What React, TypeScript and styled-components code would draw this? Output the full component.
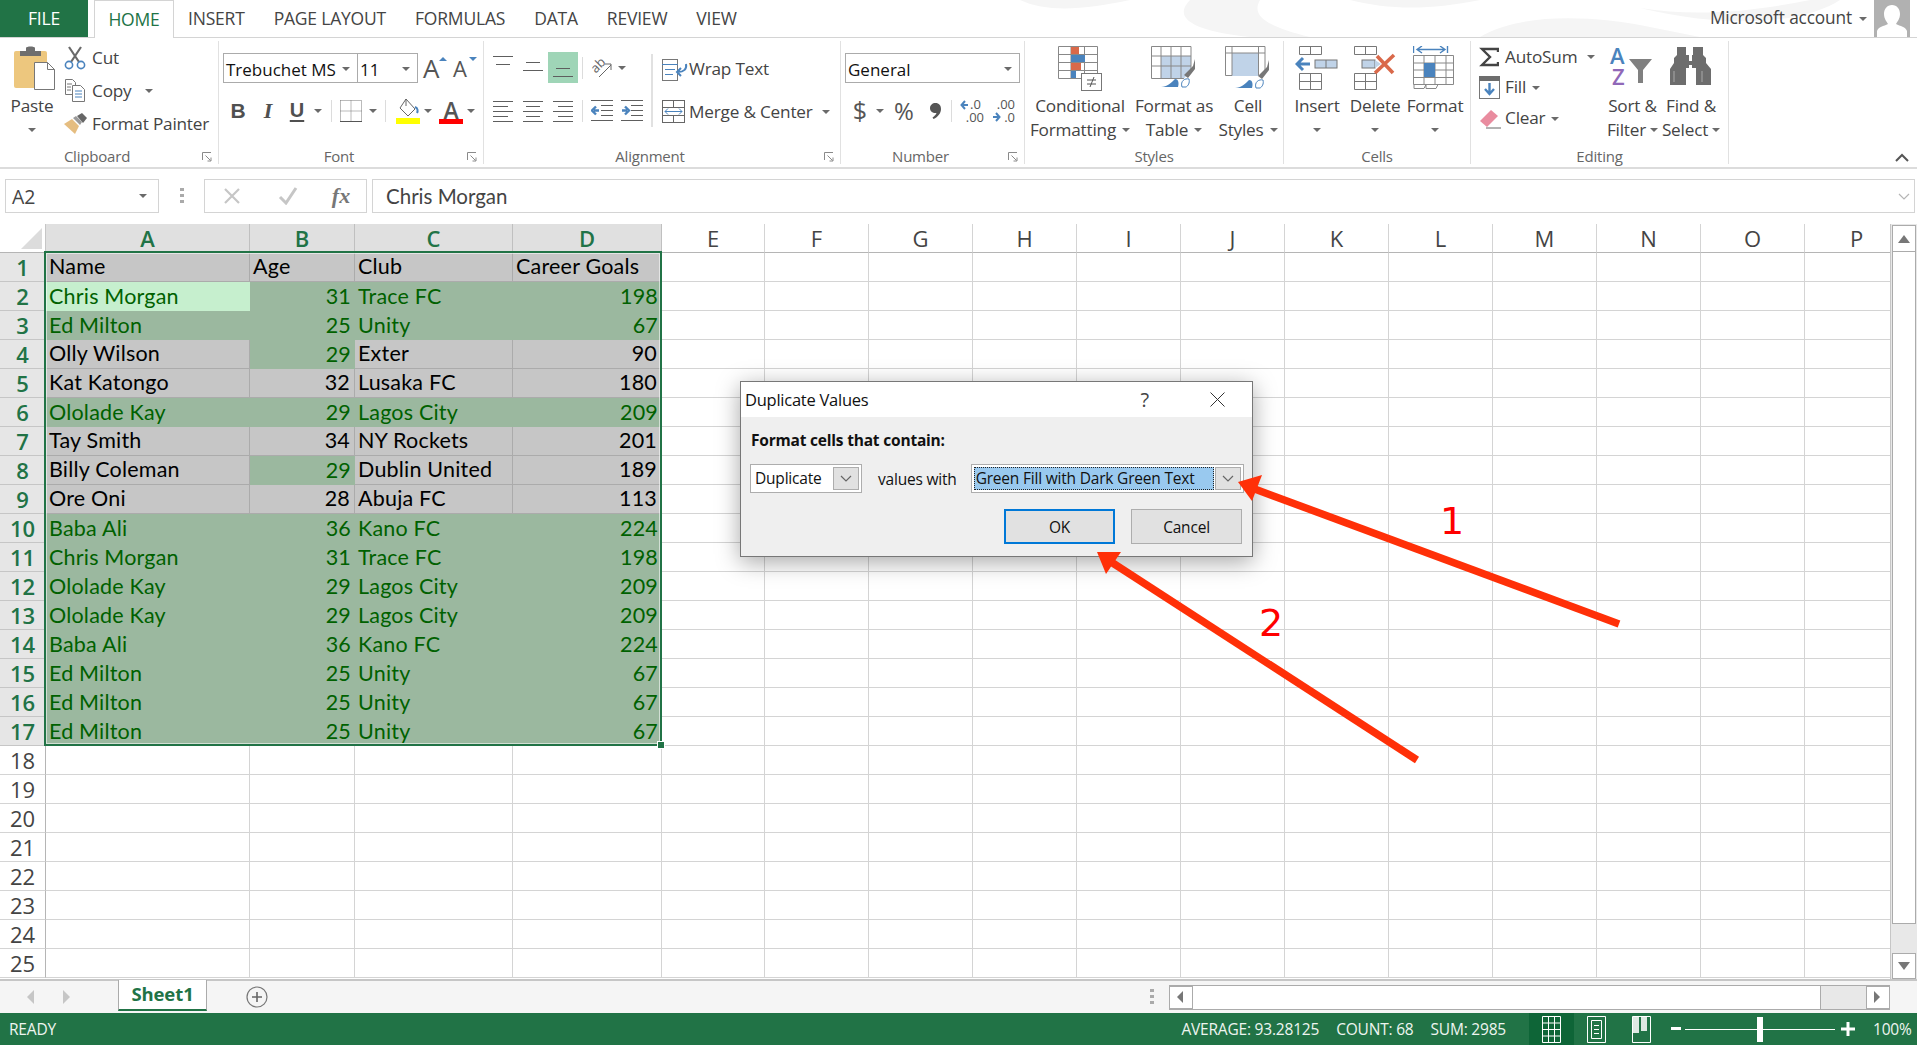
import styled, { createGlobalStyle } from 'styled-components';

const UI_FONT = `'Open Sans', 'Noto Sans', sans-serif`;
const CELL_FONT = `Lato, 'Open Sans', sans-serif`;
const GREEN = '#217346';
const INK = '#444444';

const GlobalStyle = createGlobalStyle`
    html, body {
        margin: 0;
        padding: 0;
        overflow: hidden;
        background: #fff;
    }
    * { box-sizing: border-box; }
`;

/* ---------- data ---------- */
type Tone = 'grey' | 'green' | 'active';

interface RowData {
    name: string;
    age: string;
    club: string;
    goals: string;
    tones: Tone[];
}

const G: Tone = 'grey';
const V: Tone = 'green';
const allGrey = [G, G, G, G];
const allGreen = [V, V, V, V];
const ageOnly = [G, V, G, G];

const rows: RowData[] = [
    { name: 'Name', age: 'Age', club: 'Club', goals: 'Career Goals', tones: allGrey },
    { name: 'Chris Morgan', age: '31', club: 'Trace FC', goals: '198', tones: ['active', V, V, V] },
    { name: 'Ed Milton', age: '25', club: 'Unity', goals: '67', tones: allGreen },
    { name: 'Olly Wilson', age: '29', club: 'Exter', goals: '90', tones: ageOnly },
    { name: 'Kat Katongo', age: '32', club: 'Lusaka FC', goals: '180', tones: allGrey },
    { name: 'Ololade Kay', age: '29', club: 'Lagos City', goals: '209', tones: allGreen },
    { name: 'Tay Smith', age: '34', club: 'NY Rockets', goals: '201', tones: allGrey },
    { name: 'Billy Coleman', age: '29', club: 'Dublin United', goals: '189', tones: ageOnly },
    { name: 'Ore Oni', age: '28', club: 'Abuja FC', goals: '113', tones: allGrey },
    { name: 'Baba Ali', age: '36', club: 'Kano FC', goals: '224', tones: allGreen },
    { name: 'Chris Morgan', age: '31', club: 'Trace FC', goals: '198', tones: allGreen },
    { name: 'Ololade Kay', age: '29', club: 'Lagos City', goals: '209', tones: allGreen },
    { name: 'Ololade Kay', age: '29', club: 'Lagos City', goals: '209', tones: allGreen },
    { name: 'Baba Ali', age: '36', club: 'Kano FC', goals: '224', tones: allGreen },
    { name: 'Ed Milton', age: '25', club: 'Unity', goals: '67', tones: allGreen },
    { name: 'Ed Milton', age: '25', club: 'Unity', goals: '67', tones: allGreen },
    { name: 'Ed Milton', age: '25', club: 'Unity', goals: '67', tones: allGreen },
];

const columns = 'ABCDEFGHIJKLMNOP'.split('');
const tabs = ['INSERT', 'PAGE LAYOUT', 'FORMULAS', 'DATA', 'REVIEW', 'VIEW'];
const totalRows = 25;

/* ---------- shell ---------- */
const Window = styled.div`
    position: relative;
    width: 1917px;
    height: 1045px;
    display: flex;
    flex-direction: column;
    overflow: hidden;
    font-family: ${UI_FONT};
    color: ${INK};
    background: #fff;
`;

const TabBar = styled.div`
    position: relative;
    height: 38px;
    flex: none;
    display: flex;
    align-items: stretch;
    border-bottom: 1px solid #d4d4d4;
`;

const Swirls = styled.svg`
    position: absolute;
    left: 1000px;
    top: 0;
`;

const FileTab = styled.div`
    width: 88px;
    height: 37px;
    padding-bottom: 2px;
    background: ${GREEN};
    color: #fff;
    font-size: 17.5px;
    letter-spacing: -0.2px;
    display: flex;
    align-items: center;
    justify-content: center;
`;

const HomeTab = styled.div`
    width: 80px;
    height: 38px;
    margin-left: 6px;
    padding-bottom: 2px;
    background: #fff;
    border: 1px solid #d4d4d4;
    border-bottom: none;
    color: ${GREEN};
    font-size: 17.5px;
    letter-spacing: -0.2px;
    display: flex;
    align-items: center;
    justify-content: center;
    z-index: 1;
`;

const TabList = styled.div`
    display: flex;
    align-items: center;
    gap: 29px;
    margin-left: 14px;
    padding-bottom: 2px;
    font-size: 17.5px;
    letter-spacing: -0.2px;
`;

const Account = styled.div`
    position: relative;
    margin-left: auto;
    display: flex;
    align-items: center;
    font-size: 17.3px;
    letter-spacing: -0.15px;
    padding-right: 7px;
`;

const AccountName = styled.span`
    padding-bottom: 2px;
`;

const Avatar = styled.svg`
    margin-left: 7px;
`;

const Caret = styled.span<{ $ml?: number }>`
    display: inline-block;
    flex: none;
    width: 0;
    height: 0;
    margin-left: ${(p) => p.$ml ?? 6}px;
    border-left: 4px solid transparent;
    border-right: 4px solid transparent;
    border-top: 4px solid #6a6a6a;
    vertical-align: middle;
`;

/* ---------- ribbon ---------- */
const Ribbon = styled.div`
    position: relative;
    height: 131px;
    flex: none;
    display: flex;
    padding-top: 3px;
    border-bottom: 2px solid #dcdcdc;
`;

const Group = styled.div<{ $w: number }>`
    width: ${(p) => p.$w}px;
    height: 123px;
    flex: none;
    display: flex;
    flex-direction: column;
    border-right: 1px solid #e1e1e1;
`;

const GroupBody = styled.div<{ $pl?: number }>`
    height: 108px;
    display: flex;
    padding-left: ${(p) => p.$pl ?? 0}px;
`;

const GroupFoot = styled.div<{ $launch?: boolean }>`
    position: relative;
    height: 14px;
    line-height: 14px;
    font-size: 15px;
    color: #666;
    text-align: center;
    letter-spacing: -0.2px;
    padding-right: ${(p) => (p.$launch ? 24 : 0)}px;
`;

const Launcher = styled.svg`
    position: absolute;
    right: 6px;
    top: 3px;
`;

const Collapse = styled.svg`
    position: absolute;
    left: 1895px;
    top: 115px;
`;

const PasteButton = styled.div`
    width: 64px;
    display: flex;
    flex-direction: column;
    align-items: center;
    padding-top: 5px;
    padding-left: 6px;
    font-size: 17.2px;
    line-height: 24px;
    letter-spacing: -0.2px;
`;

const PasteLabel = styled.div`
    margin-top: 3px;
    margin-left: -6px;
`;

const CaretLine = styled.div`
    height: 24px;
    display: flex;
    align-items: center;
    justify-content: center;
`;

const ActionColumn = styled.div<{ $w?: number }>`
    display: flex;
    flex-direction: column;
    ${(p) => (p.$w ? `width: ${p.$w}px;` : '')}
`;

const ActionRow = styled.div<{ $h: number }>`
    height: ${(p) => p.$h}px;
    display: flex;
    align-items: center;
    font-size: 17.2px;
    letter-spacing: -0.2px;
    white-space: nowrap;
`;

const ActionText = styled.span`
    padding-bottom: 2px;
`;

const IconSlot = styled.span<{ $w: number }>`
    width: ${(p) => p.$w}px;
    flex: none;
    display: flex;
    align-items: center;
`;

const ToolStack = styled.div`
    display: flex;
    flex-direction: column;
    padding-top: 11px;
    gap: 12px;
`;

const ToolRow = styled.div`
    height: 31px;
    display: flex;
    align-items: center;
`;

const Tool = styled.span<{ $w: number; $ml?: number; $active?: boolean }>`
    width: ${(p) => p.$w}px;
    height: 31px;
    margin-left: ${(p) => p.$ml ?? 0}px;
    flex: none;
    display: flex;
    align-items: center;
    justify-content: center;
    background: ${(p) => (p.$active ? '#9fd5b7' : 'transparent')};
`;

const Sep = styled.span<{ $ml: number }>`
    width: 1px;
    height: 22px;
    flex: none;
    margin-left: ${(p) => p.$ml}px;
    background: #dcdcdc;
`;

const Combo = styled.div<{ $w: number; $joined?: boolean }>`
    width: ${(p) => p.$w}px;
    height: 30px;
    margin-top: 1px;
    margin-left: ${(p) => (p.$joined ? -1 : 0)}px;
    flex: none;
    display: flex;
    align-items: center;
    justify-content: space-between;
    padding: 2px 7px 0 2px;
    border: 1px solid #ababab;
    font-size: 17px;
    color: #111;
`;

const BoldTool = styled(Tool)`
    font-family: 'Liberation Sans', sans-serif;
    font-size: 21px;
    font-weight: 700;
    color: #505050;
`;

const ItalicTool = styled(BoldTool)`
    font-family: 'Liberation Serif', serif;
    font-style: italic;
    font-weight: 700;
    font-size: 22px;
`;

const UnderlineTool = styled(BoldTool)`
    font-weight: 700;
    text-decoration: underline;
    text-underline-offset: 3px;
    font-size: 20px;
`;

const GrowLetter = styled.span<{ $size: number; $ml: number }>`
    position: relative;
    margin-left: ${(p) => p.$ml}px;
    padding-top: 2px;
    width: 22px;
    font-size: ${(p) => p.$size}px;
    line-height: 31px;
    color: #555;
    text-align: left;
`;

const GrowMark = styled.span<{ $up?: boolean }>`
    position: absolute;
    right: -2px;
    top: 6px;
    width: 0;
    height: 0;
    border-left: 4px solid transparent;
    border-right: 4px solid transparent;
    border-${(p) => (p.$up ? 'bottom' : 'top')}: 4px solid #4a83bd;
`;

const RightAlignBlock = styled.div`
    margin: 13px 0 0 6px;
    height: 73px;
    padding-left: 9px;
    border-left: 2px solid #e1e1e1;
    display: flex;
    flex-direction: column;
    justify-content: space-between;
`;

const NumberGlyph = styled.span<{ $w: number; $ml: number; $size: number }>`
    width: ${(p) => p.$w}px;
    margin-left: ${(p) => p.$ml}px;
    font-size: ${(p) => p.$size}px;
    line-height: 31px;
    text-align: center;
    color: #555;
    flex: none;
`;

const CommaSlot = styled.span`
    width: 14px;
    margin-left: 10px;
    flex: none;
    display: flex;
    justify-content: center;
`;

const BigButton = styled.div<{ $w: number }>`
    width: ${(p) => p.$w}px;
    flex: none;
    display: flex;
    flex-direction: column;
    align-items: center;
    font-size: 17.2px;
    line-height: 24px;
    letter-spacing: -0.2px;
    white-space: nowrap;
`;

const BigIcon = styled.div`
    height: 53px;
    padding-top: 5px;
    display: flex;
    align-items: flex-start;
    justify-content: center;
`;

const BigLine = styled.div`
    height: 24px;
    display: flex;
    align-items: center;
    justify-content: center;
`;

/* glyphs inside these icons sit tight, so the svg box is larger than the drawing */
const BleedIcon = styled.svg<{ $bleed: number }>`
    margin: -${(p) => p.$bleed}px;
    flex: none;
`;

/* ---------- formula bar ---------- */
const FormulaBar = styled.div`
    height: 34px;
    margin-top: 10px;
    flex: none;
    display: flex;
    align-items: stretch;
    padding: 0 2px 0 5px;
`;

const NameBox = styled.div`
    width: 154px;
    display: flex;
    align-items: center;
    justify-content: space-between;
    padding: 0 11px 0 6px;
    border: 1px solid #d4d4d4;
    font-size: 19.5px;
`;

const Grip = styled.div`
    width: 45px;
    display: flex;
    align-items: center;
    justify-content: center;
`;

const FxBox = styled.div`
    width: 163px;
    display: flex;
    align-items: center;
    border: 1px solid #d4d4d4;
`;

const FxTool = styled.span<{ $w: number }>`
    width: ${(p) => p.$w}px;
    display: flex;
    justify-content: center;
    flex: none;
`;

const FxLabel = styled(FxTool)`
    font-family: 'Liberation Serif', serif;
    font-style: italic;
    font-size: 22px;
    color: #777;
    font-weight: 700;
`;

const FormulaInput = styled.div`
    flex: 1;
    margin-left: 5px;
    display: flex;
    align-items: center;
    justify-content: space-between;
    padding: 0 4px 0 13px;
    border: 1px solid #d4d4d4;
    font-family: ${CELL_FONT};
    font-size: 20.5px;
`;

/* ---------- sheet ---------- */
const SheetArea = styled.div`
    height: 755px;
    margin-top: 11px;
    flex: none;
    display: flex;
`;

const SheetGrid = styled.div`
    position: relative;
    width: 1890px;
    height: 754px;
    flex: none;
    overflow: hidden;
    display: grid;
    grid-template-columns: 46px 204px 105px 158px 149px 103px repeat(11, 104px);
    grid-template-rows: 29px repeat(${totalRows}, 29px);
    align-content: start;
`;

const Corner = styled.div`
    display: flex;
    align-items: center;
    justify-content: flex-end;
    padding-right: 3px;
    border-right: 1px solid #c6c6c6;
    border-bottom: 1px solid #b5b5b5;
`;

const ColHead = styled.div<{ $on: boolean }>`
    display: flex;
    align-items: center;
    justify-content: center;
    font-size: 22px;
    background: ${(p) => (p.$on ? '#e0e0e0' : '#fff')};
    color: ${(p) => (p.$on ? GREEN : INK)};
    border-right: 1px solid ${(p) => (p.$on ? '#c0c0c0' : '#d4d4d4')};
    border-bottom: 1px solid #b5b5b5;
    font-weight: ${(p) => (p.$on ? 600 : 400)};
`;

const RowHead = styled.div<{ $on: boolean }>`
    display: flex;
    align-items: center;
    justify-content: center;
    font-size: 22px;
    background: ${(p) => (p.$on ? '#e6e6e6' : '#fff')};
    color: ${(p) => (p.$on ? GREEN : INK)};
    border-right: 1px solid #b5b5b5;
    border-bottom: 1px solid ${(p) => (p.$on ? '#c6c6c6' : '#d4d4d4')};
    font-weight: ${(p) => (p.$on ? 600 : 400)};
`;

const toneBg = { grey: '#c6c6c6', green: '#9bb89f', active: '#c6efce' };

const Cell = styled.div<{ $tone: Tone; $right?: boolean }>`
    display: flex;
    align-items: center;
    justify-content: ${(p) => (p.$right ? 'flex-end' : 'flex-start')};
    padding: 0 4px 2px 3px;
    font-family: ${CELL_FONT};
    font-size: 21.5px;
    letter-spacing: 0.2px;
    white-space: nowrap;
    background: ${(p) => toneBg[p.$tone]};
    color: ${(p) => (p.$tone === 'grey' ? '#000' : '#006100')};
    ${(p) =>
        p.$tone === 'grey'
            ? `border-right: 1px solid #ababab; border-bottom: 1px solid #ababab;`
            : ''}
`;

const EmptyCell = styled.div`
    border-right: 1px solid #d4d4d4;
    border-bottom: 1px solid #d4d4d4;
`;

const SelectionBox = styled.div`
    position: absolute;
    left: 44px;
    top: 27px;
    width: 618px;
    height: 495px;
    border: 2px solid ${GREEN};
    box-shadow: inset 0 0 0 1px rgba(255, 255, 255, 0.55);
    pointer-events: none;
`;

const FillHandle = styled.div`
    position: absolute;
    right: -5px;
    bottom: -5px;
    width: 8px;
    height: 8px;
    background: ${GREEN};
    border: 1px solid #fff;
`;

const VScroll = styled.div`
    width: 27px;
    height: 755px;
    padding: 1px 1px 0 1px;
    display: flex;
    flex-direction: column;
    background: #e8e8e8;
    border-left: 1px solid #c6c6c6;
`;

const ScrollButton = styled.div<{ $w?: number; $h?: number }>`
    width: ${(p) => (p.$w ? `${p.$w}px` : '100%')};
    height: ${(p) => (p.$h ? `${p.$h}px` : '100%')};
    flex: none;
    background: #fff;
    border: 1px solid #ababab;
    display: flex;
    align-items: center;
    justify-content: center;
`;

const VThumb = styled.div`
    height: 672px;
    flex: none;
    background: #fff;
    border: 1px solid #ababab;
    border-top: none;
`;

const VTrack = styled.div`
    flex: 1;
`;

/* ---------- sheet tabs ---------- */
const SheetBar = styled.div`
    height: 34px;
    flex: none;
    display: flex;
    background: #f5f5f5;
    border-top: 2px solid #c6c6c6;
    position: relative;
`;

const SheetNav = styled.div`
    width: 118px;
    display: flex;
    align-items: center;
    justify-content: center;
    gap: 28px;
    padding: 0 20px 0 0;
`;

const SheetTab = styled.div`
    width: 89px;
    height: 31px;
    margin-top: -1px;
    padding-bottom: 2px;
    display: flex;
    align-items: center;
    justify-content: center;
    background: #fff;
    border-left: 1px solid #ababab;
    border-right: 1px solid #ababab;
    border-bottom: 2px solid ${GREEN};
    font-weight: 700;
    font-size: 18.5px;
    letter-spacing: -0.1px;
    color: ${GREEN};
`;

const AddSheet = styled.div`
    margin-left: 39px;
    display: flex;
    align-items: center;
`;

const HScrollWrap = styled.div`
    margin-left: auto;
    display: flex;
    align-items: center;
    padding-right: 27px;
    gap: 15px;
`;

const HScroll = styled.div`
    width: 721px;
    height: 25px;
    display: flex;
    background: #e8e8e8;
    border-top: 1px solid #ababab;
    border-bottom: 1px solid #ababab;
`;

const HThumb = styled.div`
    width: 628px;
    background: #fff;
    border-right: 1px solid #ababab;
`;

const HTrack = styled.div`
    flex: 1;
`;

/* ---------- status bar ---------- */
const StatusBar = styled.div`
    height: 32px;
    flex: none;
    display: flex;
    align-items: stretch;
    background: ${GREEN};
    color: #eef5f0;
    font-size: 15.5px;
    letter-spacing: -0.2px;
`;

const StatusLeft = styled.div`
    padding-left: 9px;
    display: flex;
    align-items: center;
`;

const StatusStats = styled.div`
    margin-left: auto;
    display: flex;
    align-items: center;
    gap: 17px;
`;

const ViewButton = styled.div<{ $on?: boolean; $ml?: number }>`
    width: 45px;
    margin-left: ${(p) => p.$ml ?? 0}px;
    display: flex;
    align-items: center;
    justify-content: center;
    background: ${(p) => (p.$on ? '#0e6537' : 'transparent')};
`;

const Zoomer = styled.div`
    width: 253px;
    display: flex;
    align-items: center;
    padding-left: 7px;
`;

const ZoomTrack = styled.div`
    position: relative;
    width: 150px;
    height: 1px;
    margin: 0 6px 0 4px;
    background: #fff;
`;

const ZoomThumb = styled.div`
    position: absolute;
    left: 72px;
    top: -12px;
    width: 6px;
    height: 25px;
    background: #fff;
`;

const ZoomPct = styled.span`
    margin-left: 18px;
`;

/* ---------- dialog ---------- */
const Dialog = styled.div`
    position: absolute;
    left: 740px;
    top: 381px;
    width: 513px;
    height: 176px;
    display: flex;
    flex-direction: column;
    background: #efefef;
    border: 1px solid #777;
    box-shadow: 0 5px 22px rgba(0, 0, 0, 0.35);
    color: #111;
`;

const DialogTitle = styled.div`
    height: 35px;
    flex: none;
    display: flex;
    align-items: center;
    padding-left: 4px;
    background: #fff;
    font-size: 16.5px;
    letter-spacing: -0.25px;
`;

const HelpMark = styled.span`
    margin-left: auto;
    font-size: 20px;
    color: #444;
`;

const CloseMark = styled.svg`
    margin: 0 27px 0 61px;
`;

const DialogHeading = styled.div`
    margin: 13px 0 0 10px;
    font-weight: 700;
    font-size: 15.5px;
    letter-spacing: -0.2px;
    line-height: 20px;
`;

const DialogRow = styled.div`
    margin: 14px 0 0 9px;
    display: flex;
    align-items: center;
`;

const DialogSelect = styled.div<{ $w: number }>`
    width: ${(p) => p.$w}px;
    height: 29px;
    flex: none;
    display: flex;
    align-items: stretch;
    padding: 2px;
    background: #fff;
    border: 1px solid #adadad;
    font-size: 15.5px;
    letter-spacing: -0.2px;
`;

const SelectValue = styled.div<{ $hot?: boolean }>`
    flex: 1;
    display: flex;
    align-items: center;
    padding: 0 0 1px 2px;
    background: ${(p) => (p.$hot ? '#99c9ef' : 'transparent')};
    outline: ${(p) => (p.$hot ? '1px dotted #222' : 'none')};
    outline-offset: -1px;
    white-space: nowrap;
`;

const SelectArrow = styled.div`
    width: 26px;
    flex: none;
    margin-left: 1px;
    display: flex;
    align-items: center;
    justify-content: center;
    background: #e1e1e1;
    border: 1px solid #adadad;
`;

const ValuesLabel = styled.span`
    margin: 0 14px 0 16px;
    font-size: 15.5px;
    letter-spacing: -0.2px;
`;

const DialogActions = styled.div`
    margin: 16px 0 0 263px;
    display: flex;
    gap: 16px;
`;

const DialogButton = styled.div<{ $primary?: boolean }>`
    width: 111px;
    height: 35px;
    display: flex;
    align-items: center;
    justify-content: center;
    background: #e1e1e1;
    border: ${(p) => (p.$primary ? '2px solid #0078d7' : '1px solid #adadad')};
    font-size: 15.5px;
    letter-spacing: -0.2px;
`;

const Annotations = styled.svg`
    position: absolute;
    left: 0;
    top: 0;
    pointer-events: none;
`;

const Callout = styled.span<{ $x: number; $y: number }>`
    position: absolute;
    left: ${(p) => p.$x}px;
    top: ${(p) => p.$y}px;
    font-family: 'DejaVu Sans', sans-serif;
    font-size: 38px;
    line-height: 44px;
    color: #ff0000;
`;

/* ---------- icons ---------- */
const BLUE = '#4a83bd';

const PasteIcon = () => (
    <svg width="42" height="45" viewBox="0 0 42 45">
        <rect x="0" y="5" width="33" height="37" rx="2" fill="#edc77e" />
        <path d="M6 5h6V2c0-2 9-2 9 0v3h6v5H6z" fill="#6e6e6e" />
        <path d="M20.5 16.5h13l7 7v20h-20z" fill="#fff" stroke="#777" />
        <path d="M33.5 16.5v7h7" fill="none" stroke="#777" />
    </svg>
);

const CutIcon = () => (
    <svg width="22" height="24" viewBox="0 0 22 24">
        <path d="M5 1l10 15M17 1L7 16" stroke="#6a6a6a" strokeWidth="2.2" fill="none" />
        <circle cx="5" cy="19" r="3.6" fill="none" stroke={BLUE} strokeWidth="1.6" />
        <circle cx="17" cy="19" r="3.6" fill="none" stroke={BLUE} strokeWidth="1.6" />
    </svg>
);

const CopyIcon = () => (
    <svg width="22" height="23" viewBox="0 0 22 23" fill="none">
        <path d="M1.5.5h7l3 3v12h-10z" stroke="#777" fill="#fff" />
        <path d="M8.5 6.5h8l4 4v12h-12z" stroke="#777" fill="#fff" />
        <path d="M3 5h5M3 8h4M3 11h4" stroke="#777" />
        <path d="M11 12h7M11 15h7M11 18h7" stroke={BLUE} />
    </svg>
);

const PainterIcon = () => (
    <svg width="24" height="22" viewBox="0 0 24 22">
        <path d="M0 11l8-5 7 7-4 8z" fill="#e5bd80" />
        <path d="M9 5l3-2 6 6-2 3z" fill="#9a9a9a" />
        <path d="M13 3l5-3 5 5-4 5z" fill="#666" />
    </svg>
);

const Launch = () => (
    <Launcher width="10" height="10" viewBox="0 0 10 10" fill="none">
        <path d="M.5 8V.5H9" stroke="#8a8a8a" />
        <path d="M3.5 3.5l5 5M9 5.5V9H5.5" stroke="#8a8a8a" />
    </Launcher>
);

const BordersIcon = () => (
    <svg width="22" height="22" viewBox="0 0 22 22" fill="none">
        <path d="M.5.5h21v21M.5.5v21M11 .5v21M.5 11h21" stroke="#777" strokeDasharray="1 1" />
        <path d="M0 21.5h22" stroke="#555" />
    </svg>
);

const FillIcon = () => (
    <svg width="25" height="26" viewBox="0 0 25 26">
        <path d="M10 1l9 10-7 7-8-8z" fill="#fff" stroke="#666" />
        <path d="M10 1v7" stroke="#666" />
        <path d="M19 9c3 1 3 4 2 6" stroke={BLUE} strokeWidth="2" fill="none" />
        <rect x="0" y="20" width="24" height="6" fill="#ffff00" />
    </svg>
);

const FontColorLetter = styled.span`
    position: relative;
    width: 24px;
    height: 26px;
    font-size: 23px;
    font-weight: 600;
    line-height: 24px;
    text-align: center;
    color: #555;
    border-bottom: 5px solid #ff0000;
`;

type Seg = [number, number, number];

const HLines = ({ segs }: { segs: Seg[] }) => (
    <svg width="30" height="31" viewBox="0 0 30 31">
        {segs.map(([a, b, y], i) => (
            <path key={i} d={`M${a} ${y + 0.5}H${b}`} stroke="#5e5e5e" />
        ))}
    </svg>
);

const para = (a: number[]): Seg[] => {
    const ys = [6, 11, 16, 21, 26];
    return ys.map((y, i) => [i % 2 ? a[0] : a[2], i % 2 ? a[1] : a[3], y]);
};

const OrientIcon = () => (
    <BleedIcon $bleed={10} width="42" height="44" viewBox="-10 -10 42 44">
        <text
            x="1"
            y="13"
            fontSize="13"
            fill="#666"
            fontFamily="'Open Sans', sans-serif"
            transform="rotate(-45 8 12)"
        >
            ab
        </text>
        <path d="M7 21L19 9M13 8h6v6" stroke="#666" fill="none" />
    </BleedIcon>
);

const IndentIcon = ({ flip }: { flip?: boolean }) => (
    <svg width="24" height="22" viewBox="0 0 24 22">
        <path d="M0 .5h22M10 5.5h12M10 10.5h12M10 15.5h12M0 20.5h22" stroke="#5e5e5e" />
        {flip ? (
            <path d="M1 10.5h5M4 6.5l4 4-4 4" stroke={BLUE} strokeWidth="2.4" fill="none" />
        ) : (
            <path d="M8 10.5H3M5 6.5l-4 4 4 4" stroke={BLUE} strokeWidth="2.4" fill="none" />
        )}
    </svg>
);

const WrapIcon = () => (
    <svg width="26" height="22" viewBox="0 0 26 22" fill="none">
        <rect x=".5" y=".5" width="15" height="21" fill="#fff" stroke="#777" />
        <path d="M0 5.5h16M3 10.5h10M3 15.5h8" stroke={BLUE} />
        <path d="M24 5c1 5-2 8-8 8M19 9l-4 4 4 4" stroke={BLUE} strokeWidth="2" />
    </svg>
);

const MergeIcon = () => (
    <svg width="24" height="23" viewBox="0 0 24 23" fill="none">
        <rect x=".5" y=".5" width="22" height="22" stroke="#666" />
        <path d="M.5 7.5h22M.5 15.5h22M11.5 .5v7M11.5 15.5v7" stroke="#666" />
        <path d="M3 11.5h17M6 8.5l-3 3 3 3M17 8.5l3 3-3 3" stroke={BLUE} />
    </svg>
);

const DecimalIcon = ({ top, bottom, up }: { top: string; bottom: string; up?: boolean }) => (
    <BleedIcon $bleed={6} width="36" height="36" viewBox="-6 -6 36 36">
        {up ? (
            <path d="M8 6H3M5 2L1.5 6 5 10" stroke={BLUE} strokeWidth="2" fill="none" />
        ) : (
            <path d="M2 18h5M5 14l3.5 4-3.5 4" stroke={BLUE} strokeWidth="2" fill="none" />
        )}
        <text
            x={up ? 10 : 24}
            textAnchor={up ? 'start' : 'end'}
            y="10"
            fontSize="13"
            fill="#555"
            fontFamily="'Open Sans', sans-serif"
        >
            {top}
        </text>
        <text
            x={24}
            textAnchor="end"
            y="23"
            fontSize="13"
            fill="#555"
            fontFamily="'Open Sans', sans-serif"
        >
            {bottom}
        </text>
    </BleedIcon>
);

const ConditionalIcon = () => (
    <svg width="44" height="45" viewBox="0 0 44 45" fill="none">
        <path d="M.5.5h39v32H.5zM.5 8.5h39M.5 16.5h39M.5 24.5h39M13 .5v32M26.5 .5v32" stroke="#888" />
        <rect x="13" y="1" width="8" height="7" fill="#d9694a" />
        <rect x="13" y="9" width="14" height="7" fill={BLUE} />
        <rect x="13" y="17" width="10" height="7" fill="#d9694a" />
        <rect x="13" y="25" width="5" height="7" fill={BLUE} />
        <rect x="23.5" y="27.5" width="20" height="17" fill="#fff" stroke="#777" />
        <path d="M29 34h9M29 38h9M36 31l-4 10" stroke="#555" />
    </svg>
);

const Brush = () => (
    <>
        <path d="M33 30l9-9 2-7v10l-7 9z" fill="#777" />
        <path d="M31 42c-2-6 3-9 7-8 1 4-1 7-3 8z" fill="#fff" stroke={BLUE} />
        <path d="M10 42c6 0 10-4 14-8 4 0 4 5 3 8z" fill={BLUE} />
    </>
);

const TableStyleIcon = () => (
    <svg width="46" height="43" viewBox="0 0 46 43" fill="none">
        <rect x="10" y="10" width="30" height="23" fill="#c0d3e8" />
        <path d="M.5.5h39.5v32H.5zM.5 10h39.5M.5 20h39.5M10 .5v32M20 .5v32M30 .5v32" stroke="#888" />
        <path d="M30 36L44 20v22H10z" fill="#fff" />
        <g transform="translate(0 -1)">
            <Brush />
        </g>
    </svg>
);

const CellStyleIcon = () => (
    <svg width="46" height="45" viewBox="0 0 46 45" fill="none">
        <path d="M.5.5h39.5v29H.5z" stroke="#888" />
        <rect x="7" y="7" width="27" height="23" fill="#c0d3e8" />
        <path d="M.5 7h39.5M7 .5v29M33.5 .5v29" stroke="#888" />
        <path d="M28 36L44 20v24H10z" fill="#fff" />
        <Brush />
    </svg>
);

const InsertIcon = () => (
    <svg width="44" height="44" viewBox="0 0 44 44" fill="none">
        <path d="M4.5 .5h22v8h-22zM15.5 .5v8M4.5 27.5h22v16h-22zM4.5 35.5h22M15.5 27.5v16" stroke="#777" />
        <rect x="20" y="14" width="22" height="8" fill="#c0d3e8" stroke="#777" />
        <path d="M31 14v8" stroke="#777" />
        <path d="M15 18H3M8 12l-6 6 6 6" stroke={BLUE} strokeWidth="3" />
    </svg>
);

const DeleteIcon = () => (
    <svg width="45" height="44" viewBox="0 0 45 44" fill="none">
        <path d="M1.5 .5h22v8h-22zM12.5 .5v8M1.5 27.5h22v16h-22zM1.5 35.5h22M12.5 27.5v16" stroke="#777" />
        <rect x="9" y="14" width="13" height="8" fill="#c0d3e8" stroke="#777" />
        <path d="M22 14l6 4-6 4z" fill="#c0d3e8" />
        <path d="M24 10l16 17M41 9L22 27" stroke="#d9694a" strokeWidth="3.6" />
    </svg>
);

const FormatIcon = () => (
    <svg width="44" height="46" viewBox="0 0 44 46" fill="none">
        <path d="M.5 0v7M34.5 0v7M5 3.5h26M9 0L4 3.5 9 7M27 0l5 3.5L27 7" stroke={BLUE} strokeWidth="1.4" />
        <path d="M.5 9.5h40v29H.5zM.5 31.5h40M11 9.5v29M22 9.5v29M33 9.5v29M.5 17h40M.5 24h40" stroke="#888" />
        <rect x="11" y="17" width="11" height="14" fill={BLUE} />
        <path d="M1 38.5v4h10l2-4M13 38.5v4h10l2-4" stroke="#888" />
    </svg>
);

const SigmaIcon = () => (
    <svg width="20" height="20" viewBox="0 0 20 20" fill="none">
        <path d="M19 5V2H3l8 8-8 8h16v-3" stroke="#444" strokeWidth="2.4" />
    </svg>
);

const FillDownIcon = () => (
    <svg width="21" height="23" viewBox="0 0 21 23" fill="none">
        <rect x=".5" y=".5" width="20" height="22" stroke="#777" fill="#fff" />
        <rect x="0" y="0" width="21" height="5" fill="#6d6d6d" />
        <path d="M10.5 7v11M6 13l4.5 5 4.5-5" stroke={BLUE} strokeWidth="2.4" />
    </svg>
);

const ClearIcon = () => (
    <svg width="22" height="20" viewBox="0 0 22 20">
        <path d="M1 12l11-11 7 6-11 11z" fill="#e98c9f" />
        <path d="M7 19h15" stroke="#666" />
    </svg>
);

const SortIcon = () => (
    <BleedIcon $bleed={10} width="65" height="62" viewBox="-10 -10 65 62">
        <text x="0" y="18" fontSize="22" fontFamily="'Open Sans', sans-serif" fill={BLUE} fontWeight="600">
            A
        </text>
        <text x="2" y="39" fontSize="22" fontFamily="'Open Sans', sans-serif" fill="#9068b8" fontWeight="600">
            Z
        </text>
        <path d="M19 13h23l-9 11v13h-5V24z" fill="#808080" />
    </BleedIcon>
);

const BinocularsIcon = () => (
    <svg width="44" height="40" viewBox="0 0 44 40">
        <path
            d="M8 1h9v8h3v6h3V9h1V1h10v8l3 3v5l5 6v16H27V22h-4v-3h-3v3h-3v17H1V23l4-6v-5l3-3z"
            fill="#6d6d6d"
        />
        <path d="M5 25v11M33 25v11" stroke="#aaa" strokeWidth="1" />
    </svg>
);

const CommaIcon = () => (
    <svg width="11" height="16" viewBox="0 0 11 16">
        <path d="M5.5 0C9 0 11 2.5 11 6c0 4-3 8-7.5 10L2.5 14.5C4.5 13 6 11.5 6.5 10 3 10.5 0 8.5 0 5.2 0 2 2.5 0 5.5 0z" fill="#555" />
    </svg>
);

const Chevron = ({ color = '#666' }: { color?: string }) => (
    <svg width="12" height="7" viewBox="0 0 12 7" fill="none">
        <path d="M1 1l5 5 5-5" stroke={color} strokeWidth="1.2" />
    </svg>
);

const GridViewIcon = () => (
    <svg width="19" height="27" viewBox="0 0 19 27" fill="none">
        <path d="M.5.5h18v26H.5zM.5 7h18M.5 13.5h18M.5 20h18M6.5 .5v26M12.5 .5v26" stroke="#fff" />
    </svg>
);

const PageViewIcon = () => (
    <svg width="19" height="27" viewBox="0 0 19 27" fill="none">
        <path d="M.5.5h18v26H.5z" stroke="#fff" />
        <path d="M4.5 4.5h10v18h-10zM7 9.5h5M7 13.5h5M7 17.5h5" stroke="#fff" />
    </svg>
);

const BreakViewIcon = () => (
    <svg width="19" height="27" viewBox="0 0 19 27" fill="none">
        <path d="M.5.5h18v26H.5z" stroke="#fff" />
        <rect x="1" y="1" width="6" height="16" fill="#dfe9e3" />
        <rect x="9" y="1" width="6" height="14" fill="#dfe9e3" />
    </svg>
);

const NavArrow = ({ left }: { left?: boolean }) => (
    <svg width="8" height="14" viewBox="0 0 8 14">
        <path d={left ? 'M7 0v14L0 7z' : 'M0 0v14l7-7z'} fill="#c6c6c6" />
    </svg>
);

const ScrollArrow = ({ dir }: { dir: 'up' | 'down' | 'left' | 'right' }) => {
    const d = {
        up: 'M0 8h12L6 0z',
        down: 'M0 0h12L6 8z',
        left: 'M8 0v12L2 6z',
        right: 'M2 0v12l6-6z',
    };
    return (
        <svg width="12" height="12" viewBox="0 0 12 12">
            <path d={d[dir]} fill="#777" transform={dir === 'up' || dir === 'down' ? 'translate(0 2)' : ''} />
        </svg>
    );
};

const App = () => {
    const isSelected = (i: number) => i < 4;

    return (
        <Window>
            <GlobalStyle />

            <TabBar>
                <Swirls width="860" height="37" viewBox="0 0 860 37" fill="#f5f5f5">
                    <path d="M20 0c30 14 70 8 110 0zM190 0c-20 20 10 32 60 37h60c-40-10-60-20-50-37zM350 0c40 10 80 10 130 0z" />
                    <path d="M480 37c40-24 110-22 170-10l50 10zM640 8c60 10 120 2 170-8h30c-30 20-100 32-200 8z" />
                </Swirls>
                <FileTab>FILE</FileTab>
                <HomeTab>HOME</HomeTab>
                <TabList>
                    {tabs.map((tab) => (
                        <span key={tab}>{tab}</span>
                    ))}
                </TabList>
                <Account>
                    <AccountName>Microsoft account</AccountName>
                    <Caret $ml={7} />
                    <Avatar width="36" height="37" viewBox="0 0 36 37">
                        <rect width="36" height="37" fill="#b1b1b1" />
                        <path d="M18 5c5 0 8 4 8 9s-3 8-4 10c4 2 10 3 11 7v6H3v-6c1-4 7-5 11-7-1-2-4-5-4-10s3-9 8-9z" fill="#fff" />
                    </Avatar>
                </Account>
            </TabBar>

            <Ribbon>
                <Group $w={219}>
                    <GroupBody>
                        <PasteButton>
                            <PasteIcon />
                            <PasteLabel>Paste</PasteLabel>
                            <CaretLine>
                                <Caret $ml={-6} />
                            </CaretLine>
                        </PasteButton>
                        <ActionColumn>
                            <ActionRow $h={33}>
                                <IconSlot $w={28}>
                                    <CutIcon />
                                </IconSlot>
                                Cut
                            </ActionRow>
                            <ActionRow $h={33.5}>
                                <IconSlot $w={28}>
                                    <CopyIcon />
                                </IconSlot>
                                Copy
                                <Caret $ml={13} />
                            </ActionRow>
                            <ActionRow $h={33}>
                                <IconSlot $w={28}>
                                    <PainterIcon />
                                </IconSlot>
                                <ActionText>Format Painter</ActionText>
                            </ActionRow>
                        </ActionColumn>
                    </GroupBody>
                    <GroupFoot $launch>
                        Clipboard
                        <Launch />
                    </GroupFoot>
                </Group>

                <Group $w={265}>
                    <GroupBody $pl={4}>
                        <ToolStack>
                            <ToolRow>
                                <Combo $w={135}>
                                    Trebuchet MS
                                    <Caret $ml={0} />
                                </Combo>
                                <Combo $w={61} $joined>
                                    11
                                    <Caret $ml={0} />
                                </Combo>
                                <GrowLetter $size={26} $ml={5}>
                                    A
                                    <GrowMark $up />
                                </GrowLetter>
                                <GrowLetter $size={22} $ml={8}>
                                    A
                                    <GrowMark />
                                </GrowLetter>
                            </ToolRow>
                            <ToolRow>
                                <BoldTool $w={20} $ml={5}>B</BoldTool>
                                <ItalicTool $w={20} $ml={10}>I</ItalicTool>
                                <UnderlineTool $w={20} $ml={9}>U</UnderlineTool>
                                <Caret $ml={7} />
                                <Sep $ml={9} />
                                <Tool $w={24} $ml={7}>
                                    <BordersIcon />
                                </Tool>
                                <Caret $ml={6} />
                                <Sep $ml={8} />
                                <Tool $w={26} $ml={9}>
                                    <FillIcon />
                                </Tool>
                                <Caret $ml={3} />
                                <Tool $w={26} $ml={6}>
                                    <FontColorLetter>A</FontColorLetter>
                                </Tool>
                                <Caret $ml={3} />
                            </ToolRow>
                        </ToolStack>
                    </GroupBody>
                    <GroupFoot $launch>
                        Font
                        <Launch />
                    </GroupFoot>
                </Group>

                <Group $w={357}>
                    <GroupBody $pl={4}>
                        <ToolStack>
                            <ToolRow>
                                <Tool $w={30}>
                                    <HLines segs={[[5, 25, 4], [8, 22, 12]]} />
                                </Tool>
                                <Tool $w={30}>
                                    <HLines segs={[[8, 22, 10], [5, 25, 18]]} />
                                </Tool>
                                <Tool $w={30} $active>
                                    <HLines segs={[[8, 22, 16], [5, 25, 24]]} />
                                </Tool>
                                <Sep $ml={4} />
                                <Tool $w={22} $ml={9}>
                                    <OrientIcon />
                                </Tool>
                                <Caret $ml={4} />
                            </ToolRow>
                            <ToolRow>
                                <Tool $w={30}>
                                    <HLines segs={para([5, 20, 5, 25])} />
                                </Tool>
                                <Tool $w={30}>
                                    <HLines segs={para([8, 22, 5, 25])} />
                                </Tool>
                                <Tool $w={30}>
                                    <HLines segs={para([10, 25, 5, 25])} />
                                </Tool>
                                <Sep $ml={4} />
                                <Tool $w={24} $ml={8}>
                                    <IndentIcon />
                                </Tool>
                                <Tool $w={24} $ml={6}>
                                    <IndentIcon flip />
                                </Tool>
                            </ToolRow>
                        </ToolStack>
                        <RightAlignBlock>
                            <ActionRow $h={31}>
                                <IconSlot $w={27}>
                                    <WrapIcon />
                                </IconSlot>
                                <ActionText>Wrap Text</ActionText>
                            </ActionRow>
                            <ActionRow $h={31}>
                                <IconSlot $w={27}>
                                    <MergeIcon />
                                </IconSlot>
                                Merge &amp; Center
                                <Caret $ml={9} />
                            </ActionRow>
                        </RightAlignBlock>
                    </GroupBody>
                    <GroupFoot $launch>
                        Alignment
                        <Launch />
                    </GroupFoot>
                </Group>

                <Group $w={184}>
                    <GroupBody $pl={4}>
                        <ToolStack>
                            <ToolRow>
                                <Combo $w={175}>
                                    General
                                    <Caret $ml={0} />
                                </Combo>
                            </ToolRow>
                            <ToolRow>
                                <NumberGlyph $w={20} $ml={5} $size={25}>$</NumberGlyph>
                                <Caret $ml={6} />
                                <NumberGlyph $w={28} $ml={6} $size={24}>%</NumberGlyph>
                                <CommaSlot>
                                    <CommaIcon />
                                </CommaSlot>
                                <Sep $ml={9} />
                                <Tool $w={24} $ml={8}>
                                    <DecimalIcon top=".0" bottom=".00" up />
                                </Tool>
                                <Tool $w={24} $ml={7}>
                                    <DecimalIcon top=".00" bottom=".0" />
                                </Tool>
                            </ToolRow>
                        </ToolStack>
                    </GroupBody>
                    <GroupFoot $launch>
                        Number
                        <Launch />
                    </GroupFoot>
                </Group>

                <Group $w={259}>
                    <GroupBody>
                        <BigButton $w={110}>
                            <BigIcon>
                                <ConditionalIcon />
                            </BigIcon>
                            <BigLine>Conditional</BigLine>
                            <BigLine>
                                Formatting
                                <Caret />
                            </BigLine>
                        </BigButton>
                        <BigButton $w={78}>
                            <BigIcon>
                                <TableStyleIcon />
                            </BigIcon>
                            <BigLine>Format as</BigLine>
                            <BigLine>
                                Table
                                <Caret />
                            </BigLine>
                        </BigButton>
                        <BigButton $w={70}>
                            <BigIcon>
                                <CellStyleIcon />
                            </BigIcon>
                            <BigLine>Cell</BigLine>
                            <BigLine>
                                Styles
                                <Caret />
                            </BigLine>
                        </BigButton>
                    </GroupBody>
                    <GroupFoot>Styles</GroupFoot>
                </Group>

                <Group $w={187}>
                    <GroupBody>
                        <BigButton $w={66}>
                            <BigIcon>
                                <InsertIcon />
                            </BigIcon>
                            <BigLine>Insert</BigLine>
                            <BigLine>
                                <Caret $ml={0} />
                            </BigLine>
                        </BigButton>
                        <BigButton $w={50}>
                            <BigIcon>
                                <DeleteIcon />
                            </BigIcon>
                            <BigLine>Delete</BigLine>
                            <BigLine>
                                <Caret $ml={0} />
                            </BigLine>
                        </BigButton>
                        <BigButton $w={70}>
                            <BigIcon>
                                <FormatIcon />
                            </BigIcon>
                            <BigLine>Format</BigLine>
                            <BigLine>
                                <Caret $ml={0} />
                            </BigLine>
                        </BigButton>
                    </GroupBody>
                    <GroupFoot>Cells</GroupFoot>
                </Group>

                <Group $w={258}>
                    <GroupBody $pl={8}>
                        <ActionColumn $w={121}>
                            <ActionRow $h={31}>
                                <IconSlot $w={26}>
                                    <SigmaIcon />
                                </IconSlot>
                                AutoSum
                                <Caret $ml={10} />
                            </ActionRow>
                            <ActionRow $h={31}>
                                <IconSlot $w={26}>
                                    <FillDownIcon />
                                </IconSlot>
                                <ActionText>Fill</ActionText>
                                <Caret />
                            </ActionRow>
                            <ActionRow $h={31}>
                                <IconSlot $w={26}>
                                    <ClearIcon />
                                </IconSlot>
                                <ActionText>Clear</ActionText>
                                <Caret />
                            </ActionRow>
                        </ActionColumn>
                        <BigButton $w={65}>
                            <BigIcon>
                                <SortIcon />
                            </BigIcon>
                            <BigLine>Sort &amp;</BigLine>
                            <BigLine>
                                Filter
                                <Caret $ml={4} />
                            </BigLine>
                        </BigButton>
                        <BigButton $w={52}>
                            <BigIcon>
                                <BinocularsIcon />
                            </BigIcon>
                            <BigLine>Find &amp;</BigLine>
                            <BigLine>
                                Select
                                <Caret $ml={4} />
                            </BigLine>
                        </BigButton>
                    </GroupBody>
                    <GroupFoot>Editing</GroupFoot>
                </Group>

                <Collapse width="14" height="9" viewBox="0 0 14 9" fill="none">
                    <path d="M1 8l6-6 6 6" stroke="#555" strokeWidth="2" />
                </Collapse>
            </Ribbon>

            <FormulaBar>
                <NameBox>
                    A2
                    <Caret $ml={0} />
                </NameBox>
                <Grip>
                    <svg width="4" height="16" viewBox="0 0 4 16" fill="#aaa">
                        <rect width="4" height="3" />
                        <rect y="6" width="4" height="3" />
                        <rect y="12" width="4" height="3" />
                    </svg>
                </Grip>
                <FxBox>
                    <FxTool $w={54}>
                        <svg width="18" height="18" viewBox="0 0 18 18" fill="none">
                            <path d="M2 2l14 14M16 2L2 16" stroke="#c6c6c6" strokeWidth="2.2" />
                        </svg>
                    </FxTool>
                    <FxTool $w={58}>
                        <svg width="20" height="18" viewBox="0 0 20 18" fill="none">
                            <path d="M2 10l6 6L18 1" stroke="#c6c6c6" strokeWidth="3" />
                        </svg>
                    </FxTool>
                    <FxLabel $w={48}>fx</FxLabel>
                </FxBox>
                <FormulaInput>
                    Chris Morgan
                    <Chevron color="#b5b5b5" />
                </FormulaInput>
            </FormulaBar>

            <SheetArea>
                <SheetGrid>
                    <Corner>
                        <svg width="21" height="21" viewBox="0 0 21 21">
                            <path d="M21 0v21H0z" fill="#dcdcdc" />
                        </svg>
                    </Corner>
                    {columns.map((c, i) => (
                        <ColHead key={c} $on={isSelected(i)}>
                            {c}
                        </ColHead>
                    ))}
                    {Array.from({ length: totalRows }, (_, r) => {
                        const row = rows[r];
                        return [
                            <RowHead key={`h${r}`} $on={Boolean(row)}>
                                {r + 1}
                            </RowHead>,
                            ...columns.map((c, i) => {
                                if (!row || i > 3) {
                                    return <EmptyCell key={`${c}${r}`} />;
                                }
                                const values = [row.name, row.age, row.club, row.goals];
                                const numeric = r > 0 && (i === 1 || i === 3);
                                return (
                                    <Cell key={`${c}${r}`} $tone={row.tones[i]} $right={numeric}>
                                        {values[i]}
                                    </Cell>
                                );
                            }),
                        ];
                    })}
                    <SelectionBox>
                        <FillHandle />
                    </SelectionBox>
                </SheetGrid>
                <VScroll>
                    <ScrollButton $h={27}>
                        <ScrollArrow dir="up" />
                    </ScrollButton>
                    <VThumb />
                    <VTrack />
                    <ScrollButton $h={26}>
                        <ScrollArrow dir="down" />
                    </ScrollButton>
                </VScroll>
            </SheetArea>

            <SheetBar>
                <SheetNav>
                    <NavArrow left />
                    <NavArrow />
                </SheetNav>
                <SheetTab>Sheet1</SheetTab>
                <AddSheet>
                    <svg width="22" height="22" viewBox="0 0 22 22" fill="none">
                        <circle cx="11" cy="11" r="10" stroke="#777" strokeWidth="1.2" />
                        <path d="M11 6v10M6 11h10" stroke="#666" strokeWidth="1.6" />
                    </svg>
                </AddSheet>
                <HScrollWrap>
                    <svg width="4" height="16" viewBox="0 0 4 16" fill="#aaa">
                        <rect width="4" height="3" />
                        <rect y="6" width="4" height="3" />
                        <rect y="12" width="4" height="3" />
                    </svg>
                    <HScroll>
                        <ScrollButton $w={24}>
                            <ScrollArrow dir="left" />
                        </ScrollButton>
                        <HThumb />
                        <HTrack />
                        <ScrollButton $w={24}>
                            <ScrollArrow dir="right" />
                        </ScrollButton>
                    </HScroll>
                </HScrollWrap>
            </SheetBar>

            <StatusBar>
                <StatusLeft>READY</StatusLeft>
                <StatusStats>
                    <span>AVERAGE: 93.28125</span>
                    <span>COUNT: 68</span>
                    <span>SUM: 2985</span>
                </StatusStats>
                <ViewButton $on $ml={23}>
                    <GridViewIcon />
                </ViewButton>
                <ViewButton>
                    <PageViewIcon />
                </ViewButton>
                <ViewButton>
                    <BreakViewIcon />
                </ViewButton>
                <Zoomer>
                    <svg width="10" height="4" viewBox="0 0 10 4">
                        <rect width="10" height="3" fill="#fff" />
                    </svg>
                    <ZoomTrack>
                        <ZoomThumb />
                    </ZoomTrack>
                    <svg width="14" height="14" viewBox="0 0 14 14">
                        <path d="M0 5.5h14v3H0zM5.5 0h3v14h-3z" fill="#fff" />
                    </svg>
                    <ZoomPct>100%</ZoomPct>
                </Zoomer>
            </StatusBar>

            <Dialog>
                <DialogTitle>
                    Duplicate Values
                    <HelpMark>?</HelpMark>
                    <CloseMark width="15" height="15" viewBox="0 0 15 15" fill="none">
                        <path d="M.5.5l14 14M14.5 .5l-14 14" stroke="#333" />
                    </CloseMark>
                </DialogTitle>
                <DialogHeading>Format cells that contain:</DialogHeading>
                <DialogRow>
                    <DialogSelect $w={112}>
                        <SelectValue>Duplicate</SelectValue>
                        <SelectArrow>
                            <Chevron />
                        </SelectArrow>
                    </DialogSelect>
                    <ValuesLabel>values with</ValuesLabel>
                    <DialogSelect $w={273}>
                        <SelectValue $hot>Green Fill with Dark Green Text</SelectValue>
                        <SelectArrow>
                            <Chevron />
                        </SelectArrow>
                    </DialogSelect>
                </DialogRow>
                <DialogActions>
                    <DialogButton $primary>OK</DialogButton>
                    <DialogButton>Cancel</DialogButton>
                </DialogActions>
            </Dialog>

            <Annotations width="1917" height="1045" viewBox="0 0 1917 1045" fill="#ff3008">
                <path d="M1619 624L1252 488" stroke="#ff3008" strokeWidth="7.5" />
                <path d="M1238 482l24-7-10 26z" />
                <path d="M1417 760L1105 558" stroke="#ff3008" strokeWidth="7.5" />
                <path d="M1097 552h24l-15 22z" />
            </Annotations>
            <Callout $x={1440} $y={499}>1</Callout>
            <Callout $x={1259} $y={601}>2</Callout>
        </Window>
    );
};

export default App;
